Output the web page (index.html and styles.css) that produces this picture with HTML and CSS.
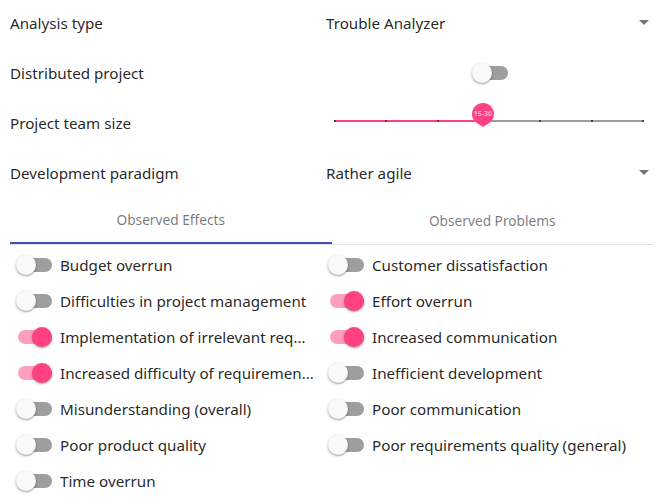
FILE: index.html
```html
<!DOCTYPE html>
<html>
<head>
<meta charset="utf-8">
<link rel="stylesheet" href="styles.css">
</head>
<body>
<div class="page">
  <div class="form">
    <div class="form-row">
      <div class="label">Analysis type</div>
      <div class="control select"><span>Trouble Analyzer</span><span class="arrow"></span></div>
    </div>
    <div class="form-row">
      <div class="label">Distributed project</div>
      <div class="control center"><span class="switch"><span class="track"></span><span class="thumb"></span></span></div>
    </div>
    <div class="form-row">
      <div class="label">Project team size</div>
      <div class="control">
        <div class="slider">
          <div class="rail"></div>
          <div class="fill" style="width:48%"></div>
          <div class="ticks"><i></i><i></i><i></i><i></i><i></i><i></i><i></i></div>
          <div class="knob" style="left:48%">
            <svg width="24" height="26" viewBox="0 0 24 26"><path d="M12 25 L6.17 21.33 A11 11 0 1 1 17.83 21.33 Z" fill="#ff4081"/></svg>
            <span>15-30</span>
          </div>
        </div>
      </div>
    </div>
    <div class="form-row">
      <div class="label">Development paradigm</div>
      <div class="control select"><span>Rather agile</span><span class="arrow"></span></div>
    </div>
  </div>
  <div class="tabs">
    <div class="tab active">Observed Effects</div>
    <div class="tab">Observed Problems</div>
  </div>
  <div class="items">
    <div class="item"><span class="switch"><span class="track"></span><span class="thumb"></span></span><span class="text">Budget overrun</span></div>
    <div class="item"><span class="switch"><span class="track"></span><span class="thumb"></span></span><span class="text">Customer dissatisfaction</span></div>
    <div class="item"><span class="switch"><span class="track"></span><span class="thumb"></span></span><span class="text">Difficulties in project management</span></div>
    <div class="item"><span class="switch on"><span class="track"></span><span class="thumb"></span></span><span class="text">Effort overrun</span></div>
    <div class="item"><span class="switch on"><span class="track"></span><span class="thumb"></span></span><span class="text">Implementation of irrelevant requirements</span></div>
    <div class="item"><span class="switch on"><span class="track"></span><span class="thumb"></span></span><span class="text">Increased communication</span></div>
    <div class="item"><span class="switch on"><span class="track"></span><span class="thumb"></span></span><span class="text">Increased difficulty of requirements engineering</span></div>
    <div class="item"><span class="switch"><span class="track"></span><span class="thumb"></span></span><span class="text">Inefficient development</span></div>
    <div class="item"><span class="switch"><span class="track"></span><span class="thumb"></span></span><span class="text">Misunderstanding (overall)</span></div>
    <div class="item"><span class="switch"><span class="track"></span><span class="thumb"></span></span><span class="text">Poor communication</span></div>
    <div class="item"><span class="switch"><span class="track"></span><span class="thumb"></span></span><span class="text">Poor product quality</span></div>
    <div class="item"><span class="switch"><span class="track"></span><span class="thumb"></span></span><span class="text">Poor requirements quality (general)</span></div>
    <div class="item"><span class="switch"><span class="track"></span><span class="thumb"></span></span><span class="text">Time overrun</span></div>
  </div>
</div>
</body>
</html>
```

FILE: styles.css
```css
* { box-sizing: border-box; }
html, body { margin: 0; padding: 0; background: #fff; }
body {
  font-family: "Noto Sans", "Open Sans", sans-serif;
  color: rgba(0,0,0,0.87);
  font-size: 15.2px;
}
.page { padding: 0 10px; width: 663px; }
.form { display: grid; row-gap: 4px; }
.form-row {
  display: grid;
  grid-template-columns: 316px 1fr;
  height: 46px;
  align-items: center;
}
.control { height: 100%; display: flex; align-items: center; }
.center { justify-content: center; }
.select { justify-content: space-between; padding-right: 4px; }
.arrow {
  width: 0; height: 0;
  border-left: 5px solid transparent;
  border-right: 5px solid transparent;
  border-top: 5px solid #757575;
  margin-top: -2px;
}
.slider { position: relative; width: 310px; margin-left: 8px; height: 20px; margin-top: -4px; }
.rail { position: absolute; left: 0; right: 0; top: 9px; height: 2px; background: #9e9e9e; }
.fill { position: absolute; left: 0; top: 9px; height: 2px; background: #ff4081; }
.ticks { position: absolute; left: 0; right: 0; top: 9px; height: 2px; display: flex; justify-content: space-between; }
.ticks i { width: 2px; height: 2px; background: #444; }
.knob {
  position: absolute; top: -9px; width: 24px; height: 26px; margin-left: -12px;
}
.knob svg { position: absolute; left: 0; top: 0; }
.knob span {
  position: absolute; left: 0; right: 0; top: 6px; text-align: center;
  font-size: 7px; font-weight: bold; color: rgba(255,255,255,0.6); line-height: 12px;
}
.tabs {
  display: grid; grid-template-columns: 1fr 1fr;
  border-bottom: 1px solid #e0e0e0;
  height: 49px;
}
.tab {
  display: flex; align-items: center; justify-content: center;
  font-size: 13.7px; color: rgba(0,0,0,0.54);
}
.tab.active { border-bottom: 2px solid #3f51b5; }
.items {
  display: grid;
  grid-template-columns: 312px 1fr;
  padding-top: 2px;
}
.item { display: flex; align-items: center; height: 36px; padding-left: 6px; min-width: 0; }
.text { margin-left: 8px; white-space: nowrap; overflow: hidden; text-overflow: ellipsis; padding-right: 8px; }
.switch { position: relative; width: 36px; height: 20px; flex: none; display: inline-block; }
.switch .track { position: absolute; left: 2px; top: 3px; width: 34px; height: 14px; border-radius: 7px; background: #9e9e9e; }
.switch .thumb {
  position: absolute; left: 0; top: 0; width: 20px; height: 20px; border-radius: 50%;
  background: #fafafa;
  box-shadow: 0 1px 3px rgba(0,0,0,0.3), 0 1px 1px rgba(0,0,0,0.14);
}
.switch.on .track { background: #ff9fc0; }
.switch.on .thumb { left: 16px; background: #ff4081; }
```
